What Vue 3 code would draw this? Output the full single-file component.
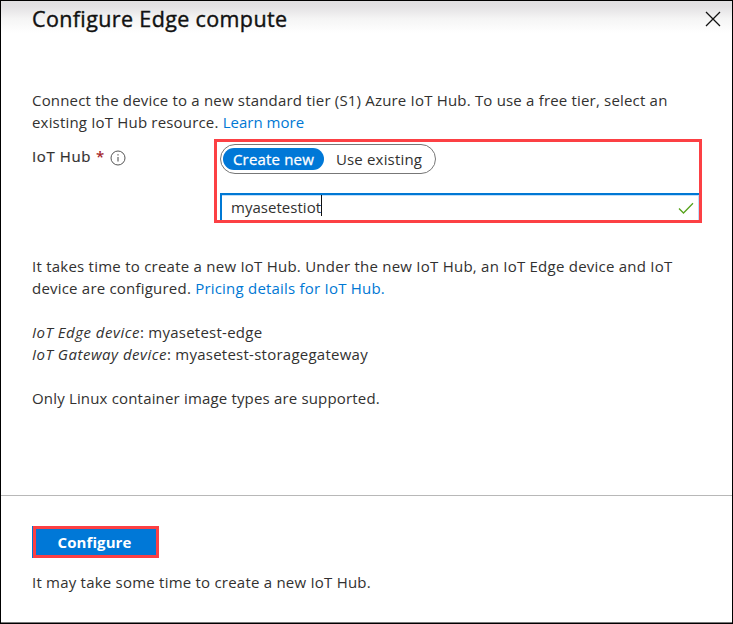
<script setup>
import { ref } from 'vue'

const mode = ref('new')
const hubName = 'myasetestiot'
</script>

<template>
  <main class="panel">
    <header class="header">
      <h1 class="title">Configure Edge compute</h1>
      <svg class="close" viewBox="0 0 16 16" width="16" height="16">
        <path d="M1 1 15 15M15 1 1 15" fill="none" stroke="#111" stroke-width="1.3" />
      </svg>
    </header>

    <section class="content">
      <p class="intro">
        <span class="line l1">Connect the device to a new standard tier (S1) Azure IoT Hub. To use a free tier, select an</span>
        <span class="line l2">existing IoT Hub resource. <a class="link learn">Learn more</a></span>
      </p>

      <div class="field">
        <label class="label">
          <span class="label-text">IoT Hub</span><span class="star">*</span>
          <svg class="info" viewBox="0 0 16 16" width="16" height="16">
            <circle cx="8" cy="8" r="7" fill="none" stroke="#555" stroke-width="1" />
            <path d="M8 7v4.5M8 4.2v1.3" fill="none" stroke="#444" stroke-width="1" />
          </svg>
        </label>
        <div class="callout">
          <div class="toggle">
            <span class="option create" :class="{ active: mode === 'new' }" @click="mode = 'new'">Create new</span>
            <span class="option existing" :class="{ active: mode === 'existing' }" @click="mode = 'existing'">Use existing</span>
          </div>
          <div class="input">
            <span class="value">{{ hubName }}</span><span class="caret"></span>
            <svg class="check" viewBox="0 0 16 14" width="16" height="14">
              <path d="M1 7.5 5.5 12 15 2.3" fill="none" stroke="#57a31c" stroke-width="1.3" />
            </svg>
          </div>
        </div>
      </div>

      <div class="details">
        <span class="line l3">It takes time to create a new IoT Hub. Under the new IoT Hub, an IoT Edge device and IoT</span>
        <span class="line l4">device are configured. <a class="link">Pricing details for IoT Hub.</a></span>
        <span class="line l5 gap"><em>IoT Edge device</em>: myasetest-edge</span>
        <span class="line l6"><em>IoT Gateway device</em>: myasetest-storagegateway</span>
        <span class="line l7 gap">Only Linux container image types are supported.</span>
      </div>
    </section>

    <footer class="footer">
      <button class="configure">Configure</button>
      <span class="line l8">It may take some time to create a new IoT Hub.</span>
    </footer>
  </main>
</template>

<style>
body {
  background: #fff;
}
</style>

<style scoped>
.panel {
  box-sizing: border-box;
  width: 733px;
  height: 624px;
  display: flex;
  flex-direction: column;
  overflow: hidden;
  border: 1px solid #000;
  box-shadow: inset 0 -1px 0 #777;
  background: linear-gradient(#e0dfe1 0, #e3e2e4 6px, #f5f5f5 18px, #fff 32px);
  color: #323130;
  font-family: 'Open Sans', 'Noto Sans', sans-serif;
  font-size: 15px;
}
.header {
  height: 88px;
  display: flex;
  justify-content: space-between;
  align-items: flex-start;
  padding: 0 11px 0 31px;
}
.title {
  margin: 3px 0 0;
  font-size: 21.5px;
  line-height: 30px;
  font-weight: 400;
  letter-spacing: 0.37px;
  -webkit-text-stroke: 0.4px #111;
  color: #111;
  white-space: nowrap;
}
.close {
  margin-top: 10px;
}
.content {
  height: 406px;
  padding-left: 31px;
}
.intro {
  margin: 0;
}
.line {
  display: block;
  line-height: 22px;
  white-space: nowrap;
}
.l1 {
  letter-spacing: 0.187px;
}
.l2 {
  letter-spacing: 0.18px;
}
.learn {
  letter-spacing: 0.02px;
}
.l3 {
  letter-spacing: 0.24px;
}
.l4 {
  letter-spacing: 0.21px;
}
.l5,
.l6 {
  letter-spacing: 0.25px;
}
.l5 em,
.l6 em {
  letter-spacing: 0.49px;
}
.l7 {
  letter-spacing: 0.17px;
}
.l8 {
  letter-spacing: 0.22px;
}
.link {
  color: #0078d4;
}
.field {
  display: flex;
  margin-top: 6px;
}
.label {
  width: 182px;
  height: 22px;
  margin-top: 6px;
  display: flex;
  align-items: center;
}
.label-text {
  letter-spacing: 0.6px;
  -webkit-text-stroke: 0.2px #323130;
}
.star {
  margin-left: 5px;
  color: #a4262c;
  font-weight: 600;
}
.info {
  margin-top: 3px;
  margin-left: 6px;
}
.callout {
  box-sizing: border-box;
  width: 488px;
  height: 84px;
  border: 3px solid #fc4044;
  padding: 2px 0 0 3px;
}
.toggle {
  box-sizing: border-box;
  width: 216px;
  height: 30px;
  display: flex;
  align-items: center;
  padding-left: 2px;
  border: 1px solid #777;
  border-radius: 15px;
}
.option {
  height: 22px;
  line-height: 22px;
  border-radius: 11px;
  text-align: center;
  white-space: nowrap;
  letter-spacing: 0.18px;
}
.create {
  width: 101px;
}
.existing {
  width: 110px;
}
.active {
  background: #0078d7;
  color: #fff;
  -webkit-text-stroke: 0.3px #fff;
}
.input {
  box-sizing: border-box;
  width: 479px;
  height: 27px;
  margin-top: 19px;
  display: flex;
  align-items: center;
  border: solid #0078d4;
  border-width: 2px 0 0 2px;
  box-shadow: inset -1px 1px 0 #c0defa;
  padding: 0 5px 0 9px;
}
.value {
  margin-top: -2px;
  letter-spacing: 0.03px;
}
.caret {
  width: 1px;
  height: 21px;
  margin-top: -4px;
  background: #111;
}
.check {
  margin-left: auto;
}
.details {
  margin-top: 32px;
}
.gap {
  margin-top: 22px;
}
.footer {
  flex: 1;
  padding: 30px 0 0 31px;
  border-top: 1px solid #b8b8b8;
}
.configure {
  box-sizing: border-box;
  display: block;
  width: 126px;
  height: 32px;
  margin: 0 0 13px 1px;
  padding: 0 3px 0 0;
  border: 3px solid #fc4044;
  box-shadow: -1px 0 0 #0078d4;
  background: #0078d7;
  color: #fff;
  font-family: inherit;
  font-size: 15px;
  font-weight: 700;
  letter-spacing: 0.1px;
}
</style>
